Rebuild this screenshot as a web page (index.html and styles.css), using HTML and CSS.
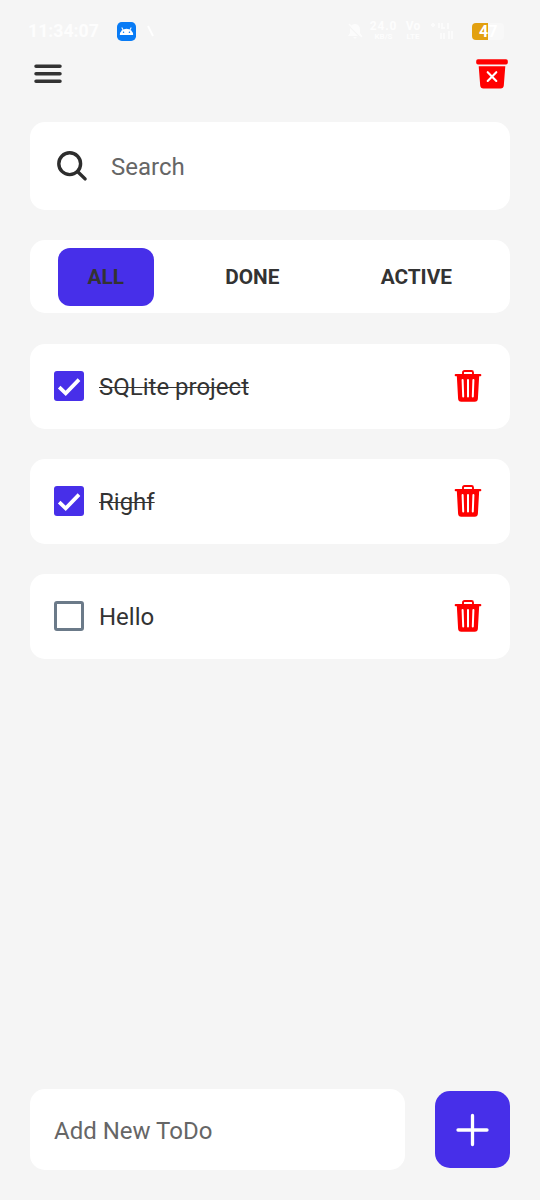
FILE: index.html
```html
<!DOCTYPE html>
<html lang="en">
<head>
<meta charset="utf-8">
<title>ToDo</title>
<link rel="stylesheet" href="styles.css">
</head>
<body>
<div class="status">
  <span class="clock">11:34:07</span>
  <svg class="robot" viewBox="0 0 18 18"><rect width="18" height="18" rx="4.5" fill="#087bf5"/><path d="M2.700 12.200a6.300 5.900 0 0 1 12.600 0z" fill="#fff"/><path d="M5.800 7.600 4.500 5.300M12.200 7.600l1.300-2.300" stroke="#fff" stroke-width="1"/><circle cx="6.200" cy="9.800" r=".7" fill="#087bf5"/><circle cx="11.800" cy="9.800" r=".7" fill="#087bf5"/></svg>
  <svg class="tick" viewBox="0 0 8 12"><path d="M1 1l5 10" stroke="#fff" stroke-width="1.800"/></svg>
  <svg class="bell" viewBox="0 0 16 16"><path d="M1 13l2-3V6a5 5 0 0 1 10 0v4l2 3zM6 14h4l-2 2z" fill="#fcfcfc"/><path d="M1 2l14 14" stroke="#f5f5f5" stroke-width="1.500"/><path d="M2 1l13 13" stroke="#fcfcfc" stroke-width="1.500"/></svg>
  <span class="pair rate"><b>24.0</b><small>KB/S</small></span>
  <span class="pair volte"><b>Vo</b><small>LTE</small></span>
  <svg class="signal" viewBox="0 0 24 18"><path d="M1 3h4M3 1v4M9 1v5M12 1v5h3M18 1v6M11 11v6M14 11v6M19 9v8M22 9v8" fill="none" stroke="#fbfbfb" stroke-width="2"/></svg>
  <span class="battery">47</span>
</div>
<header class="header">
  <svg class="menu" viewBox="0 0 28 20"><path d="M2 2.200h24M2 9.700h24M2 17.200h24" stroke="#333" stroke-width="3.500" stroke-linecap="round"/></svg>
  <svg class="bin" viewBox="0 0 32 30"><rect x=".2" y=".2" width="31.600" height="5.400" rx="1.800" fill="#f00"/><path d="M2.700 7.200h26.600l-1.500 19.300a3.200 3.200 0 0 1-3.200 2.900H7.400a3.200 3.200 0 0 1-3.200-2.900z" fill="#f00"/><path d="M11.700 13.200l8.600 8.800M20.300 13.200l-8.600 8.800" stroke="#fff" stroke-width="2.100" stroke-linecap="round"/></svg>
</header>
<main class="main">
  <div class="card search">
    <svg class="lens" viewBox="0 0 32 32"><circle cx="13.700" cy="13.700" r="10.900" fill="none" stroke="#2d2d2d" stroke-width="3.400"/><path d="M21.500 21.500l7.600 7.400" stroke="#2d2d2d" stroke-width="3.400" stroke-linecap="round"/></svg>
    <span class="hint">Search</span>
  </div>
  <nav class="card tabs">
    <span class="tab active">ALL</span><span class="tab">DONE</span><span class="tab">ACTIVE</span>
  </nav>
  <div class="card item">
    <span class="box checked"><svg viewBox="0 0 30 30"><path d="M5.200 16.200l6.500 6.200L25 8.600" fill="none" stroke="#fff" stroke-width="3.700"/></svg></span>
    <span class="label done">SQLite project</span>
    <svg class="trash" viewBox="0 0 28 32"><use href="#trash"/></svg>
  </div>
  <div class="card item">
    <span class="box checked"><svg viewBox="0 0 30 30"><path d="M5.200 16.200l6.500 6.200L25 8.600" fill="none" stroke="#fff" stroke-width="3.700"/></svg></span>
    <span class="label done">Righf</span>
    <svg class="trash" viewBox="0 0 28 32"><use href="#trash"/></svg>
  </div>
  <div class="card item">
    <span class="box"></span>
    <span class="label">Hello</span>
    <svg class="trash" viewBox="0 0 28 32"><use href="#trash"/></svg>
  </div>
</main>
<footer class="footer">
  <div class="card entry"><span class="hint">Add New ToDo</span></div>
  <div class="add"><svg viewBox="0 0 34 34"><path d="M16.500 2.500v29M2 17h29" stroke="#fff" stroke-width="3.300" stroke-linecap="round"/></svg></div>
</footer>
<svg class="defs"><defs><g id="trash"><path d="M9 5V2.500Q9 1 10.500 1h7Q19 1 19 2.500V5" fill="none" stroke="#f00" stroke-width="1.900"/><rect x=".7" y="4" width="26.600" height="2.200" rx="1" fill="#f00"/><path d="M2.800 5.500h22.400l-1.300 23.300a3.200 3.200 0 0 1-3.200 3H7.300a3.200 3.200 0 0 1-3.200-3z" fill="#f00"/><path d="M8.600 10l.6 16.500M14 10v16.500M19.400 10l-.6 16.500" stroke="#fff" stroke-width="2" stroke-linecap="round"/></g></defs></svg>
</body>
</html>
```
FILE: styles.css
```css
* { box-sizing: border-box; }
body {
  margin: 0;
  width: 540px;
  height: 1200px;
  overflow: hidden;
  display: flex;
  flex-direction: column;
  background: #f5f5f5;
  color: #333;
  font-family: Roboto, sans-serif;
  font-size: 24px;
}
svg { display: block; flex: none; }
.defs { width: 0; height: 0; }
.status {
  height: 58px;
  padding: 4px 36px 0 28px;
  display: flex;
  align-items: center;
  color: #fdfdfd;
}
.clock { width: 89px; font-size: 17.7px; font-weight: 700; line-height: 20px; padding-bottom: 1px; }
.robot { width: 19px; height: 19px; }
.tick { width: 8px; height: 12px; margin-left: 11px; }
.bell { width: 16px; height: 16px; margin-left: auto; }
.pair { display: flex; flex-direction: column; align-items: center; }
.pair b { font-size: 12px; line-height: 12px; }
.pair small { font-size: 8px; font-weight: 700; line-height: 10px; }
.rate { width: 29px; margin-left: 6px; }
.rate b { letter-spacing: 0.8px; }
.volte { width: 18px; margin-left: 6px; }
.signal { width: 24px; height: 18px; margin-left: 8px; }
.battery {
  width: 32px;
  height: 17px;
  margin-left: 18px;
  padding-left: 7px;
  border-radius: 4px;
  background: linear-gradient(90deg, #e2a00f 16.5px, #f8f8f8 16.5px);
  color: #fff;
  font-size: 16px;
  font-weight: 700;
  line-height: 18px;
}
.header {
  height: 64px;
  padding: 0 32px 0 34px;
  display: flex;
  justify-content: space-between;
}
.menu { width: 28px; height: 20px; margin-top: 6px; }
.bin { width: 32px; height: 30px; margin-top: 1px; }
.main { padding: 0 30px; }
.card {
  display: flex;
  align-items: center;
  border-radius: 15px;
  background: #fff;
}
.hint { color: #666; line-height: 28px; padding-top: 1px; }
.search { height: 88px; padding-left: 26px; gap: 23px; margin-bottom: 30px; }
.lens { width: 32px; height: 32px; }
.tabs {
  height: 73px;
  padding: 1px 28px 0 27.5px;
  justify-content: space-between;
  margin-bottom: 31px;
}
.tab {
  padding: 1px 30px 0;
  border-radius: 12px;
  font-size: 20.8px;
  font-weight: 700;
  line-height: 57px;
}
.tab.active { background: #472fe9; }
.item { height: 85px; padding: 0 28px 0 24px; margin-bottom: 29.8px; }
.item .box, .item .trash { margin-top: -1px; }
.box {
  width: 30px;
  height: 30px;
  flex: none;
  border: 3px solid #6b7a89;
  border-radius: 3px;
}
.box.checked { border: 0; background: #472fe9; }
.label { flex: 1; margin-left: 15px; line-height: 28px; padding-top: 1px; }
.done { text-decoration: line-through; text-decoration-thickness: 1px; }
.trash { width: 28px; height: 32px; }
.footer {
  margin-top: auto;
  padding: 0 30px 30px;
  display: flex;
  justify-content: space-between;
  align-items: center;
}
.entry { width: 375px; height: 81px; padding-left: 24px; }
.entry .hint { padding-top: 2px; }
.add {
  width: 75px;
  height: 77px;
  display: grid;
  place-items: center;
  border-radius: 15px;
  background: #472fe9;
}
.add svg { width: 34px; height: 34px; }
```
